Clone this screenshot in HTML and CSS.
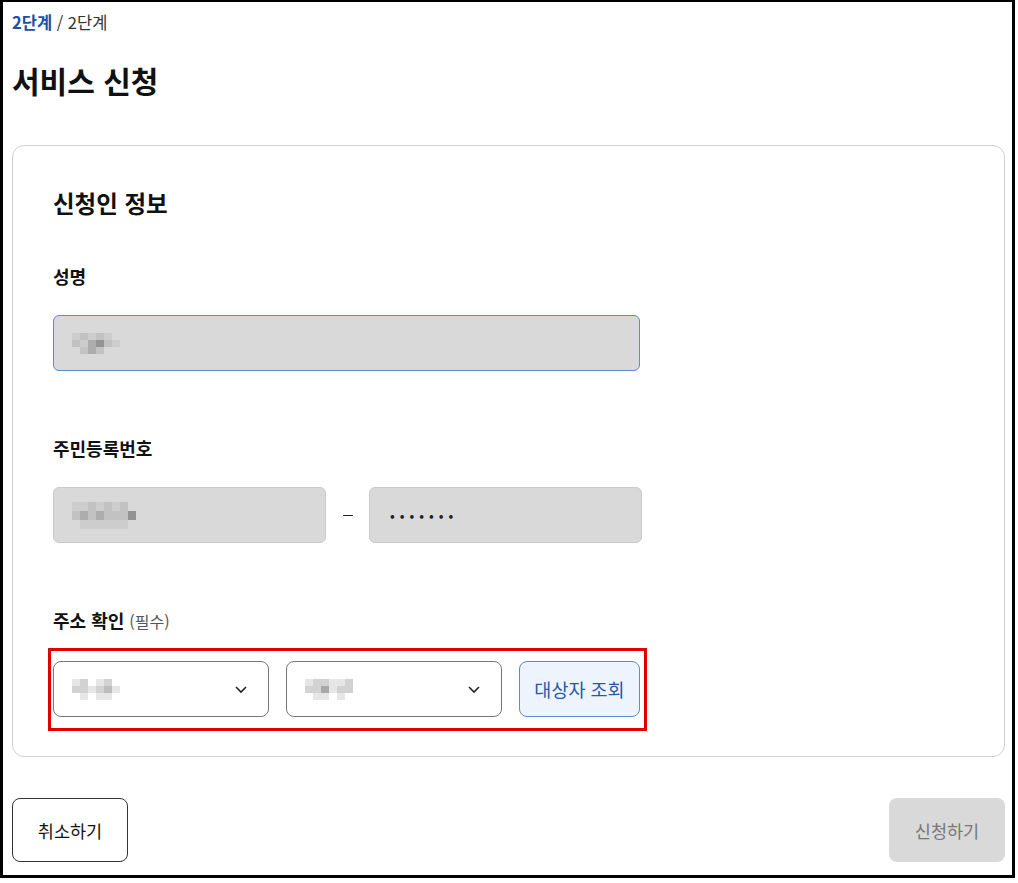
FILE: index.html
```html
<!DOCTYPE html>
<html lang="ko">
<head>
    <meta charset="UTF-8">
    <meta name="viewport" content="width=device-width, initial-scale=1.0">
    <title>서비스 신청</title>
    <link rel="stylesheet" href="styles.css">
</head>
<body>
    <div class="frame">
        <!-- 상단 경로 -->
        <p class="breadcrumb"><span class="crumb-current">2단계</span> / 2단계</p>
        <h1 class="page-title">서비스 신청</h1>

        <!-- 신청인 정보 카드 -->
        <section class="card">
            <h2 class="card__title">신청인 정보</h2>

            <div class="field">
                <p class="field__label">성명</p>
                <div class="input input--focus">
                    <span class="mosaic mosaic--name">
                        <i class="c1"></i><i class="c2"></i><i class="c1"></i><i class="c2"></i><i class="c1"></i><i class="c0"></i>
                        <i class="c2"></i><i class="c1"></i><i class="c3"></i><i class="c4"></i><i class="c2"></i><i class="c1"></i>
                        <i class="c0"></i><i class="c2"></i><i class="c3"></i><i class="c2"></i><i class="c0"></i><i class="c0"></i>
                    </span>
                </div>
            </div>

            <div class="field">
                <p class="field__label">주민등록번호</p>
                <div class="rrn">
                    <div class="input">
                        <span class="mosaic mosaic--rrn">
                            <i class="c1"></i><i class="c1"></i><i class="c2"></i><i class="c1"></i><i class="c2"></i><i class="c1"></i><i class="c2"></i><i class="c0"></i>
                            <i class="c2"></i><i class="c3"></i><i class="c2"></i><i class="c3"></i><i class="c2"></i><i class="c2"></i><i class="c2"></i><i class="c4"></i>
                            <i class="c0"></i><i class="c1"></i><i class="c1"></i><i class="c1"></i><i class="c1"></i><i class="c1"></i><i class="c1"></i><i class="c0"></i>
                        </span>
                    </div>
                    <span class="rrn__dash"></span>
                    <div class="input">
                        <span class="dots">•••••••</span>
                    </div>
                </div>
            </div>

            <div class="field">
                <p class="field__label">주소 확인 <span class="field__note">(필수)</span></p>
                <div class="address-row">
                    <div class="select">
                        <span class="mosaic mosaic--sel">
                            <i class="c1"></i><i class="c2"></i><i class="c0"></i><i class="c1"></i><i class="c2"></i><i class="c0"></i>
                            <i class="c2"></i><i class="c2"></i><i class="c1"></i><i class="c2"></i><i class="c3"></i><i class="c1"></i>
                            <i class="c0"></i><i class="c1"></i><i class="c0"></i><i class="c1"></i><i class="c1"></i><i class="c0"></i>
                        </span>
                        <svg class="chevron" width="14" height="9" viewBox="0 0 14 9"><path d="M2 2l5 5 5-5" fill="none" stroke="#222" stroke-width="1.6"/></svg>
                    </div>
                    <div class="select">
                        <span class="mosaic mosaic--sel">
                            <i class="c1"></i><i class="c2"></i><i class="c2"></i><i class="c1"></i><i class="c1"></i><i class="c2"></i>
                            <i class="c2"></i><i class="c2"></i><i class="c4"></i><i class="c1"></i><i class="c2"></i><i class="c2"></i>
                            <i class="c0"></i><i class="c1"></i><i class="c1"></i><i class="c0"></i><i class="c1"></i><i class="c0"></i>
                        </span>
                        <svg class="chevron" width="14" height="9" viewBox="0 0 14 9"><path d="M2 2l5 5 5-5" fill="none" stroke="#222" stroke-width="1.6"/></svg>
                    </div>
                    <button class="lookup-btn">대상자 조회</button>
                </div>
            </div>
        </section>

        <!-- 하단 버튼 -->
        <div class="actions">
            <button class="btn btn--cancel">취소하기</button>
            <button class="btn btn--submit" disabled>신청하기</button>
        </div>
    </div>
</body>
</html>
```

FILE: styles.css
```css
body {
    margin: 0;
    background: #fff;
    font-family: "Noto Sans CJK KR", "Noto Sans", sans-serif;
    color: #111;
}
.frame {
    box-sizing: border-box;
    width: 1015px;
    height: 878px;
    border: 3px solid #000;
    border-top-width: 2px;
    padding: 10px 7px 0 9px;
}
.breadcrumb {
    margin: 0;
    font-size: 16.5px;
    line-height: 20px;
    color: #333;
}
.crumb-current {
    color: #1d4fa3;
    font-weight: bold;
}
.page-title {
    margin: 28px 0 0;
    font-size: 30px;
    line-height: 40px;
    font-weight: bold;
    color: #111;
}

/* 카드 */
.card {
    margin-top: 45px;
    border: 1px solid #cfcfcf;
    border-radius: 12px;
    padding: 41px 40px 25px;
}
.card__title {
    margin: 0;
    font-size: 23.5px;
    line-height: 32px;
    font-weight: bold;
}
.field {
    margin-top: 45px;
}
.field + .field {
    margin-top: 65px;
}
.field__label {
    margin: 0;
    font-size: 18px;
    line-height: 24px;
    font-weight: bold;
}
.field__note {
    font-size: 16px;
    font-weight: normal;
    color: #555;
}

.input {
    box-sizing: border-box;
    width: 587px;
    height: 56px;
    margin-top: 27px;
    background: #d9d9d9;
    border: 1px solid #cacaca;
    border-radius: 6px;
    display: flex;
    align-items: center;
    padding: 0 18px;
}
.input--focus {
    border-color: #5b8ad6;
}
.rrn {
    display: flex;
    align-items: center;
    margin-top: 27px;
}
.rrn .input {
    width: 273px;
    margin-top: 0;
}
.rrn__dash {
    width: 10px;
    height: 1px;
    background: #222;
    margin: 0 16px 0 17px;
}
.dots {
    font-size: 14px;
    letter-spacing: 5px;
    color: #222;
    padding-left: 2px;
}

/* 모자이크 처리 */
.mosaic {
    display: grid;
    grid-template-columns: repeat(6, 8px);
    grid-auto-rows: 7px;
}
.mosaic--rrn {
    grid-template-columns: repeat(8, 8px);
    grid-auto-rows: 9px;
}
.mosaic i {
    display: block;
}
.c0 { background: transparent; }
.c1 { background: #cdcdcd; }
.c2 { background: #c2c2c2; }
.c3 { background: #adadad; }
.c4 { background: #939393; }
.select .c1 { background: #e6e6e6; }
.select .c2 { background: #d2d2d2; }
.select .c3 { background: #bcbcbc; }
.select .c4 { background: #a8a8a8; }

/* 주소 선택 */
.address-row {
    display: flex;
    gap: 17px;
    width: 599px;
    box-sizing: border-box;
    margin: 15px 0 0 -5px;
    border: 3px solid #e00000;
    padding: 10px 4px 11px 2px;
}
.select {
    box-sizing: border-box;
    width: 216px;
    height: 56px;
    border: 1px solid #777;
    border-radius: 8px;
    display: flex;
    align-items: center;
    justify-content: space-between;
    padding: 0 20px 0 18px;
}
.chevron {
    display: block;
}
.lookup-btn {
    width: 121px;
    height: 56px;
    border: 1px solid #5b8ad6;
    border-radius: 8px;
    background: #edf4fe;
    color: #2a58a6;
    font-family: inherit;
    font-size: 18.5px;
    cursor: pointer;
}

/* 하단 버튼 */
.actions {
    display: flex;
    justify-content: space-between;
    margin-top: 41px;
}
.btn {
    width: 116px;
    height: 64px;
    border-radius: 8px;
    font-family: inherit;
    font-size: 17.5px;
    cursor: pointer;
}
.btn--cancel {
    background: #fff;
    border: 1px solid #333;
    color: #111;
}
.btn--submit {
    background: #d9d9d9;
    border: none;
    color: #777;
}
```
